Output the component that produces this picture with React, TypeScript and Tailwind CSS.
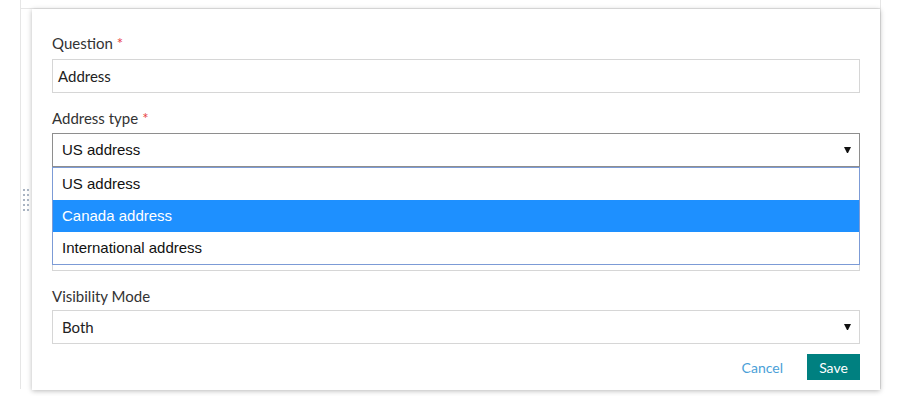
import React from 'react';

const Arrow = () => (
  <svg width="7" height="6" viewBox="0 0 7 6" className="absolute right-[8px] top-1/2 -translate-y-1/2">
    <path d="M0 0H7L4 6H3Z" fill="#111" />
  </svg>
);

const Label = ({ text, required, className = 'mb-[5px]' }: { text: string; required?: boolean; className?: string }) => (
  <div className={`h-5 leading-5 text-[15px] text-[#333] ${className}`}>
    {text}
    {required && <span className="text-[#e8423f] ml-1">*</span>}
  </div>
);

const options = ['US address', 'Canada address', 'International address'];

export default function App() {
  return (
    <div className="w-[901px] h-[396px] bg-white pl-[20px] pr-[20px] font-['Lato',sans-serif] overflow-hidden">
      <div className="relative h-[389px] border-x border-[#e6e6e6] pt-[8px]">
        {/* drag handle */}
        <div className="absolute left-[2px] top-[189px] grid grid-cols-2 gap-x-[2px] gap-y-[3px]">
          {Array.from({ length: 10 }).map((_, i) => (
            <span key={i} className="w-[2px] h-[2px] bg-[#a9b4c2]" />
          ))}
        </div>

        <div className="border-t border-[#e6e6e6] pl-[11px]">
          <div className="bg-white shadow-[0_1px_5px_rgba(0,0,0,0.28)] px-[20px] pt-[24px] pb-[9px] h-[381px]">
            {/* Question */}
            <Label text="Question" required className="mb-[6px]" />
            <div className="h-[34px] border border-[#d6d6d6] px-[5px] flex items-center text-[15px] text-[#222] mb-[15px]">
              Address
            </div>

            {/* Address type */}
            <Label text="Address type" required />
            <div className="relative">
              <div className="relative h-[34px] border border-[#8e8e8e] pl-[9px] flex items-center text-[15px] text-[#111] font-['Liberation_Sans',sans-serif]">
                US address
                <Arrow />
              </div>
              <div className="absolute left-0 right-0 top-full z-10 bg-white border border-[#7c9bd6] font-['Liberation_Sans',sans-serif] text-[15px]">
                {options.map((o, i) => (
                  <div
                    key={o}
                    className={`h-[32px] pl-[9px] flex items-center ${i === 1 ? 'bg-[#1e90ff] text-white' : 'text-[#111]'}`}
                  >
                    {o}
                  </div>
                ))}
              </div>
            </div>

            {/* field hidden behind the open list */}
            <div className="mt-[15px] pt-[55px] mb-[15px]">
              <div className="h-[34px] border border-[#d6d6d6]" />
            </div>

            {/* Visibility Mode */}
            <div className="h-5 leading-5 text-[15px] text-[#333] mb-[4px]">Visibility Mode</div>
            <div className="relative h-[34px] border border-[#d6d6d6] pl-[9px] flex items-center text-[15px] text-[#222]">
              Both
              <Arrow />
            </div>

            <div className="flex justify-end items-center gap-[24px] mt-[10px]">
              <button className="text-[14px] text-[#4a9fd8]">Cancel</button>
              <button className="h-[26px] w-[53px] bg-[#008080] text-white text-[14px]">Save</button>
            </div>
          </div>
        </div>
      </div>
    </div>
  );
}
